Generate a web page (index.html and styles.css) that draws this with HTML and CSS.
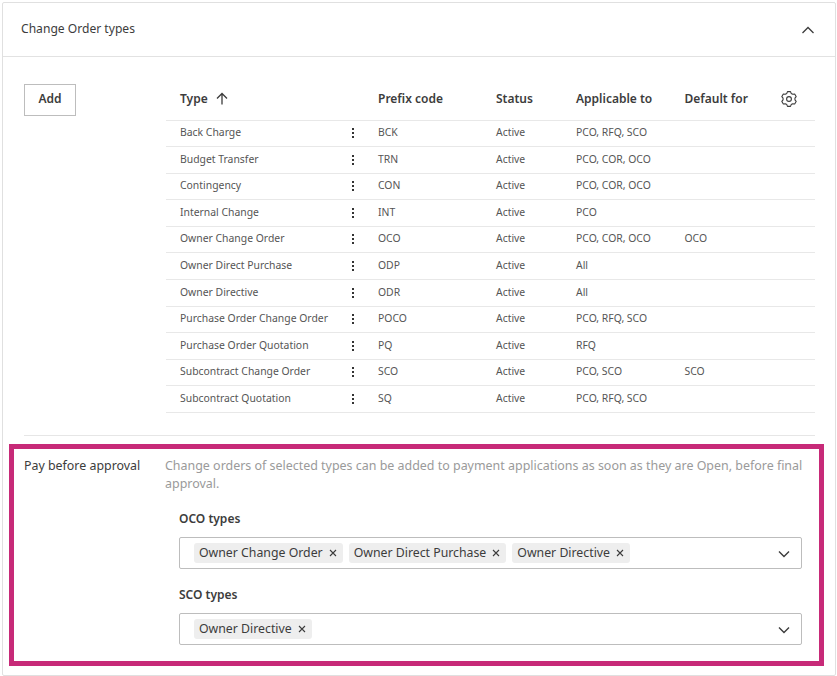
FILE: index.html
```html
<!DOCTYPE html>
<html lang="en">
<head>
<meta charset="utf-8">
<title>Change Order types</title>
<link rel="stylesheet" href="styles.css">
</head>
<body>
<section class="card">
  <header class="card-head">
    <span>Change Order types</span>
    <svg class="chev-up" width="14" height="8" viewBox="0 0 14 8"><path d="M1.5 7 7 1.5 12.5 7" fill="none" stroke="#3c3c3c" stroke-width="1.3"/></svg>
  </header>
  <div class="types">
    <button class="add">Add</button>
    <div class="table">
      <div class="row head">
        <div class="c-type">Type <svg class="arrow" width="12" height="13" viewBox="0 0 12 13"><path d="M6 12.5V1.5M1 6.5l5-5 5 5" fill="none" stroke="#3c3c3c" stroke-width="1.3"/></svg></div>
        <div class="c-menu"></div>
        <div class="c-code">Prefix code</div>
        <div class="c-status">Status</div>
        <div class="c-app">Applicable to</div>
        <div class="c-def">Default for</div>
        <div class="c-gear"><svg width="16" height="16" viewBox="0 0 16 16" fill="none" stroke="#3c3c3c" stroke-width="1.1" stroke-linejoin="round"><circle cx="8" cy="8" r="2.4"/><path d="M5.8 2.4 6.5.6h3l.7 1.8 1.55.89L13.66 3l1.5 2.6-1.21 1.51v1.78l1.21 1.51-1.5 2.6-1.91-.29-1.55.89-.7 1.8h-3l-.7-1.8-1.55-.89L2.34 13l-1.5-2.6 1.21-1.51V7.11L.84 5.6 2.34 3l1.91.29z"/></svg></div>
      </div>
      <div class="row"><div class="c-type">Back Charge</div><div class="c-menu"><i></i><i></i><i></i></div><div class="c-code">BCK</div><div class="c-status">Active</div><div class="c-app">PCO, RFQ, SCO</div><div class="c-def"></div><div class="c-gear"></div></div>
      <div class="row"><div class="c-type">Budget Transfer</div><div class="c-menu"><i></i><i></i><i></i></div><div class="c-code">TRN</div><div class="c-status">Active</div><div class="c-app">PCO, COR, OCO</div><div class="c-def"></div><div class="c-gear"></div></div>
      <div class="row"><div class="c-type">Contingency</div><div class="c-menu"><i></i><i></i><i></i></div><div class="c-code">CON</div><div class="c-status">Active</div><div class="c-app">PCO, COR, OCO</div><div class="c-def"></div><div class="c-gear"></div></div>
      <div class="row"><div class="c-type">Internal Change</div><div class="c-menu"><i></i><i></i><i></i></div><div class="c-code">INT</div><div class="c-status">Active</div><div class="c-app">PCO</div><div class="c-def"></div><div class="c-gear"></div></div>
      <div class="row"><div class="c-type">Owner Change Order</div><div class="c-menu"><i></i><i></i><i></i></div><div class="c-code">OCO</div><div class="c-status">Active</div><div class="c-app">PCO, COR, OCO</div><div class="c-def">OCO</div><div class="c-gear"></div></div>
      <div class="row"><div class="c-type">Owner Direct Purchase</div><div class="c-menu"><i></i><i></i><i></i></div><div class="c-code">ODP</div><div class="c-status">Active</div><div class="c-app">All</div><div class="c-def"></div><div class="c-gear"></div></div>
      <div class="row"><div class="c-type">Owner Directive</div><div class="c-menu"><i></i><i></i><i></i></div><div class="c-code">ODR</div><div class="c-status">Active</div><div class="c-app">All</div><div class="c-def"></div><div class="c-gear"></div></div>
      <div class="row"><div class="c-type">Purchase Order Change Order</div><div class="c-menu"><i></i><i></i><i></i></div><div class="c-code">POCO</div><div class="c-status">Active</div><div class="c-app">PCO, RFQ, SCO</div><div class="c-def"></div><div class="c-gear"></div></div>
      <div class="row"><div class="c-type">Purchase Order Quotation</div><div class="c-menu"><i></i><i></i><i></i></div><div class="c-code">PQ</div><div class="c-status">Active</div><div class="c-app">RFQ</div><div class="c-def"></div><div class="c-gear"></div></div>
      <div class="row"><div class="c-type">Subcontract Change Order</div><div class="c-menu"><i></i><i></i><i></i></div><div class="c-code">SCO</div><div class="c-status">Active</div><div class="c-app">PCO, SCO</div><div class="c-def">SCO</div><div class="c-gear"></div></div>
      <div class="row"><div class="c-type">Subcontract Quotation</div><div class="c-menu"><i></i><i></i><i></i></div><div class="c-code">SQ</div><div class="c-status">Active</div><div class="c-app">PCO, RFQ, SCO</div><div class="c-def"></div><div class="c-gear"></div></div>
    </div>
  </div>
  <hr class="rule">
  <div class="pay">
    <div class="pay-label">Pay before approval</div>
    <div class="pay-body">
      <p class="note">Change orders of selected types can be added to payment applications as soon as they are Open, before final approval.</p>
      <div class="field">
        <label>OCO types</label>
        <div class="select">
          <span class="tag">Owner Change Order <svg width="8" height="8" viewBox="0 0 8 8"><path d="M1 1l6 6M7 1 1 7" stroke="#3c3c3c" stroke-width="1.1"/></svg></span>
          <span class="tag">Owner Direct Purchase <svg width="8" height="8" viewBox="0 0 8 8"><path d="M1 1l6 6M7 1 1 7" stroke="#3c3c3c" stroke-width="1.1"/></svg></span>
          <span class="tag">Owner Directive <svg width="8" height="8" viewBox="0 0 8 8"><path d="M1 1l6 6M7 1 1 7" stroke="#3c3c3c" stroke-width="1.1"/></svg></span>
          <svg class="chev" width="12" height="8" viewBox="0 0 12 8"><path d="M1 1.5 6 6.5l5-5" fill="none" stroke="#3c3c3c" stroke-width="1.4"/></svg>
        </div>
      </div>
      <div class="field">
        <label>SCO types</label>
        <div class="select">
          <span class="tag">Owner Directive <svg width="8" height="8" viewBox="0 0 8 8"><path d="M1 1l6 6M7 1 1 7" stroke="#3c3c3c" stroke-width="1.1"/></svg></span>
          <svg class="chev" width="12" height="8" viewBox="0 0 12 8"><path d="M1 1.5 6 6.5l5-5" fill="none" stroke="#3c3c3c" stroke-width="1.4"/></svg>
        </div>
      </div>
    </div>
  </div>
</section>
</body>
</html>
```
FILE: styles.css
```css
* { box-sizing: border-box; }
html, body { margin: 0; height: 100%; background: #fff; }
body {
  padding: 2px 1px 0 2px;
  font-family: "Noto Sans", sans-serif;
  color: #3c3c3c;
  overflow: hidden;
}
.card {
  height: 674px;
  border: 1px solid #e0e0e0;
  border-radius: 2px;
}
.card-head {
  height: 54px;
  padding: 0 18px 3px;
  display: flex;
  align-items: center;
  justify-content: space-between;
  border-bottom: 1px solid #e2e2e2;
  font-size: 12.1px;
}
.chev-up { margin-right: 2px; margin-top: 4px; }
.types {
  display: flex;
  align-items: flex-start;
  padding: 27px 20px 0 21px;
}
.add {
  width: 52px;
  height: 32px;
  padding: 0 0 3px;
  border: 1px solid #bdbdbd;
  background: #fff;
  font: 600 12px "Noto Sans", sans-serif;
  color: #3c3c3c;
  flex: none;
}
.table { margin: 1px 0 0 90px; flex: 1; }
.row {
  display: grid;
  grid-template-columns: 172px 40px 118px 80px 108.5px 1fr 40px;
  align-items: center;
  height: 26.6px;
  padding-bottom: 2.4px;
  border-bottom: 1px solid #e8e8e8;
  font-size: 10.4px;
  color: #555;
}
.row.head {
  height: 35.5px;
  padding-bottom: 7.5px;
  font-size: 12px;
  font-weight: 600;
  color: #3c3c3c;
}
.c-type { padding-left: 14px; display: flex; align-items: center; gap: 8px; }
.c-menu { display: flex; flex-direction: column; align-items: center; gap: 2px; padding-right: 10px; margin-top: 2px; }
.c-menu i { width: 2px; height: 2px; background: #333; display: block; }
.c-gear { display: flex; padding-left: 6px; }
.rule {
  margin: 22px 20px 0 21px;
  border: 0;
  border-top: 1px solid #e6e6e6;
}
.pay {
  display: flex;
  margin: 8px 0 0 6px;
  width: 815px;
  height: 222px;
  border: 5px solid #c72a78;
  padding: 8px 17px 0 10px;
}
.pay-label { width: 141px; flex: none; font-size: 12.4px; line-height: 18px; }
.pay-body { flex: 1; }
.note { margin: 0 -6px 0 0; font-size: 12.45px; line-height: 18px; color: #9a9a9a; }
.field { margin: 17px 0 0 14px; }
.field + .field { margin-top: 17px; }
label { display: block; font-size: 12px; font-weight: 600; line-height: 18px; }
.select {
  position: relative;
  display: flex;
  gap: 6px;
  align-items: center;
  height: 32px;
  margin-top: 9px;
  padding: 0 14px;
  border: 1px solid #bdbdbd;
  border-radius: 2px;
}
.tag {
  display: flex;
  align-items: center;
  gap: 6px;
  height: 20px;
  padding: 0 6px 2px 5px;
  background: #eee;
  border-radius: 3px;
  font-size: 12.3px;
  white-space: nowrap;
}
.tag svg { margin-top: 2px; }
.chev { position: absolute; right: 11px; top: 12px; }
```
